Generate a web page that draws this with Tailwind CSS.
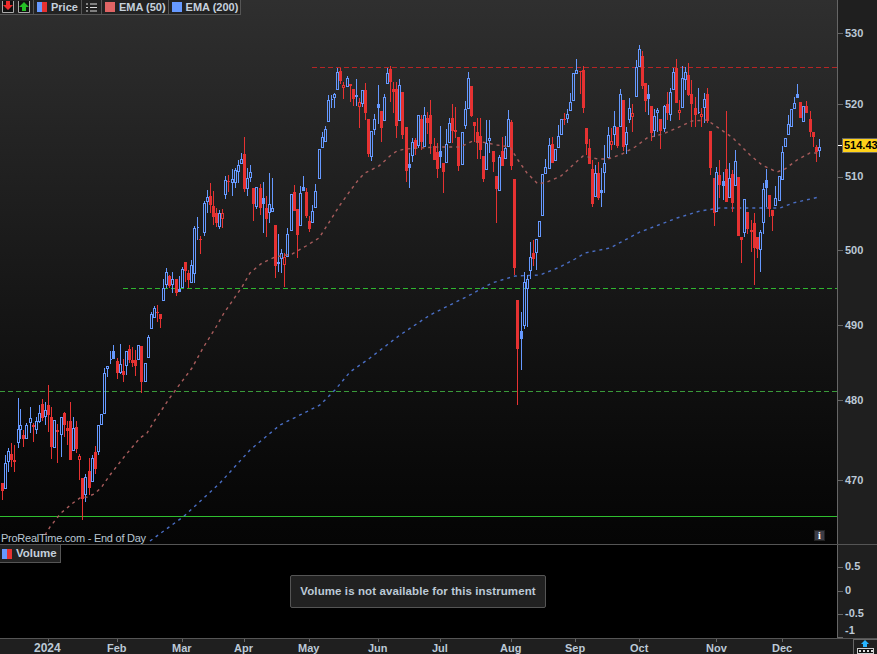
<!DOCTYPE html>
<html lang="en">
<head>
<meta charset="utf-8">
<title>Chart</title>
<script src="https://cdn.jsdelivr.net/npm/@tailwindcss/browser@4"></script>
</head>
<body class="m-0 overflow-hidden bg-black">
<div class="w-[877px] h-[654px] flex flex-col overflow-hidden font-['Liberation_Sans',Arial,sans-serif] text-[11px] font-bold text-[#bcc9d6] leading-none">
  <!-- price pane -->
  <div class="flex h-[545px] border-b border-[#555]">
    <div class="relative w-[837px] h-full bg-gradient-to-b from-[#2f2f2f] to-[#050505]">
      <svg id="chart" class="absolute inset-0" width="837" height="544" viewBox="0 0 837 544">
        <line x1="312" x2="837" y1="67.5" y2="67.5" stroke="#b52525" stroke-dasharray="5 3" shape-rendering="crispEdges"/>
        <line x1="123" x2="837" y1="288.5" y2="288.5" stroke="#2fb52f" stroke-dasharray="5 3" shape-rendering="crispEdges"/>
        <line x1="0" x2="837" y1="391.5" y2="391.5" stroke="#3a9a3a" stroke-dasharray="5 3" shape-rendering="crispEdges"/>
        <line x1="0" x2="837" y1="516.5" y2="516.5" stroke="#2fbf2f" shape-rendering="crispEdges"/>
        <polyline fill="none" stroke="#4a6ec4" stroke-width="1.4" stroke-dasharray="3 4" points="150,541 165,530 183,517 207,495 220,483 250,450 280,425 320,405 335,390 350,372 370,358 400,335 430,315 470,295 492,283 515,276 540,275 560,267 575,259 585,253 610,248 640,232 677,218 700,211 720,208 755,208 780,208 793,203 819,197"/>
        <path id="rw" fill="none" stroke="#e63232" shape-rendering="crispEdges"/>
        <path id="rb" fill="#e63232" shape-rendering="crispEdges"/>
        <path id="rh" fill="none" stroke="#e63232" shape-rendering="crispEdges"/>
        <path id="bw" fill="none" stroke="#6699ff" shape-rendering="crispEdges"/>
        <path id="bh" fill="none" stroke="#6699ff" shape-rendering="crispEdges"/>
        <path id="bs" fill="#6699ff" shape-rendering="crispEdges"/>
        <polyline fill="none" stroke="#a85c5c" stroke-width="1.4" stroke-dasharray="3 4" points="45,535 50,527 61,513 73,503 80,498 87,497 94,494 101,488 110,475 124,457 140,438 147,433 155,420 163,408 169,399 177,388 192,368 203,348 216,327 224,313 233,300 242,287 250,273 262,263 275,257 292,254 306,246 319,238 328,224 340,205 350,191 359,179 365,173 379,166 391,155 397,151 405,149 420,148 437,147 460,147 473,141 482,142 497,145 510,147 518,160 527,173 538,184 547,182 561,176 573,165 583,156 598,159 608,159 622,154 635,147 647,138 663,134 677,128 692,121 707,120 720,129 733,138 750,155 762,165 777,172 785,169 797,160 810,153 819,153"/>
      </svg>
      <!-- legend bar -->
      <div class="absolute left-0 top-0 flex h-[15px] items-center whitespace-nowrap bg-[#222] border-b border-r border-[#555] text-[#c5d0dc]">
        <div class="flex shrink-0 h-[14px] items-center gap-[2px] pl-[1px] pr-[2px] border-r border-[#555]">
          <svg width="14" height="12" viewBox="0 0 14 12"><path d="M1.500 0V11.500H12.500V0" fill="#111" stroke="#aaa"/><path d="M5 0H9V4H12L7 9L2 4H5Z" fill="#ee2b2b"/></svg>
          <svg width="14" height="12" viewBox="0 0 14 12"><path d="M1.500 0V11.500H12.500V0" fill="#111" stroke="#aaa"/><path d="M7 1L12 6H9V10H5V6H2Z" fill="#26c026"/></svg>
        </div>
        <div class="flex shrink-0 h-[14px] items-center gap-[4px] pl-[3px] pr-[3px] border-r border-[#555]">
          <span class="flex w-[10px] h-[10px]"><i class="w-1/2 bg-[#6699ff]"></i><i class="w-1/2 bg-[#e63232]"></i></span>
          <span>Price</span>
        </div>
        <div class="flex shrink-0 h-[14px] items-center px-[4px] border-r border-[#555]">
          <svg width="11" height="9" viewBox="0 0 11 9"><path d="M0 1H2M4 1H11M0 4.500H2M4 4.500H11M0 8H2M4 8H11" stroke="#ddd" fill="none"/></svg>
        </div>
        <div class="flex shrink-0 h-[14px] items-center gap-[4px] pl-[3px] pr-[2px] border-r border-[#555]">
          <span class="w-[10px] h-[10px] bg-[#e06464]"></span>
          <span>EMA (50)</span>
        </div>
        <div class="flex shrink-0 h-[14px] items-center gap-[4px] pl-[3px] pr-[2px]">
          <span class="w-[10px] h-[10px] bg-[#6699ff]"></span>
          <span>EMA (200)</span>
        </div>
      </div>
      <div class="absolute left-[1px] top-[533px] font-normal text-[11px] tracking-[-0.25px] text-[#b9c6d3]">ProRealTime.com - End of Day</div>
      <div class="absolute left-[814px] top-[530px] w-[11px] h-[11px] bg-[#3c3c46] border border-[#222] flex items-center justify-center font-['Liberation_Serif',serif] text-[10px] text-white">i</div>
    </div>
    <!-- price axis -->
    <div class="relative flex-1 bg-[#1f1f1f] border-l border-[#666]">
      <span class="absolute left-0 top-[33px] w-[5px] h-px bg-[#666]"></span><span class="absolute left-[7px] top-[28px]">530</span>
      <span class="absolute left-0 top-[104px] w-[5px] h-px bg-[#666]"></span><span class="absolute left-[7px] top-[99px]">520</span>
      <span class="absolute left-0 top-[177px] w-[5px] h-px bg-[#666]"></span><span class="absolute left-[7px] top-[171px]">510</span>
      <span class="absolute left-0 top-[250px] w-[5px] h-px bg-[#666]"></span><span class="absolute left-[7px] top-[245px]">500</span>
      <span class="absolute left-0 top-[325px] w-[5px] h-px bg-[#666]"></span><span class="absolute left-[7px] top-[320px]">490</span>
      <span class="absolute left-0 top-[400px] w-[5px] h-px bg-[#666]"></span><span class="absolute left-[7px] top-[395px]">480</span>
      <span class="absolute left-0 top-[480px] w-[5px] h-px bg-[#666]"></span><span class="absolute left-[7px] top-[475px]">470</span>
      <span class="absolute left-0 top-[145px] w-[5px] h-px bg-white"></span>
      <span class="absolute left-[4px] top-[138px] w-[36px] h-[15px] bg-[#ffd21a] border border-[#666] text-black text-[11px] flex items-center pl-[1px]">514.43</span>
    </div>
  </div>
  <!-- volume pane -->
  <div class="flex h-[94px] border-b border-[#555]">
    <div class="relative w-[837px] h-full bg-black flex items-center">
      <div class="absolute left-0 top-0 h-[18px] w-[61px] flex items-center gap-[4px] pl-[2px] bg-[#222] border border-l-0 border-t-0 border-[#555] text-[#c5d0dc] text-[11.500px]">
        <span class="flex w-[10px] h-[10px]"><i class="w-1/2 bg-[#6699ff]"></i><i class="w-1/2 bg-[#e63232]"></i></span>
        <span>Volume</span>
      </div>
      <div class="ml-[290px] w-[256px] h-[33px] flex items-center justify-center bg-[#212121] border border-[#555] rounded-[2px] text-[11.500px] tracking-[0.1px] text-[#bcc9d6]">Volume is not available for this instrument</div>
    </div>
    <div class="relative flex-1 bg-[#1f1f1f] border-l border-[#666]">
      <span class="absolute left-0 top-[22px] w-[5px] h-px bg-[#666]"></span><span class="absolute left-[7px] top-[16px]">0.5</span>
      <span class="absolute left-0 top-[46px] w-[5px] h-px bg-[#666]"></span><span class="absolute left-[7px] top-[40px]">0</span>
      <span class="absolute left-0 top-[69px] w-[5px] h-px bg-[#666]"></span><span class="absolute left-[7px] top-[63px]">-0.5</span>
      <span class="absolute left-0 top-[92px] w-[5px] h-px bg-[#666]"></span><span class="absolute left-[7px] top-[80px]">-1</span>
    </div>
  </div>
  <!-- time axis -->
  <div class="relative flex-1 bg-[#1f1f1f]">
    <span class="absolute left-[48px] top-0 w-px h-[3px] bg-[#666]"></span><span class="absolute left-[34px] top-[3px] text-[12px]">2024</span>
    <span class="absolute left-[117px] top-0 w-px h-[3px] bg-[#666]"></span><span class="absolute left-[107px] top-[4px]">Feb</span>
    <span class="absolute left-[182px] top-0 w-px h-[3px] bg-[#666]"></span><span class="absolute left-[172px] top-[4px]">Mar</span>
    <span class="absolute left-[244px] top-0 w-px h-[3px] bg-[#666]"></span><span class="absolute left-[234px] top-[4px]">Apr</span>
    <span class="absolute left-[309px] top-0 w-px h-[3px] bg-[#666]"></span><span class="absolute left-[298px] top-[4px]">May</span>
    <span class="absolute left-[378px] top-0 w-px h-[3px] bg-[#666]"></span><span class="absolute left-[368px] top-[4px]">Jun</span>
    <span class="absolute left-[440px] top-0 w-px h-[3px] bg-[#666]"></span><span class="absolute left-[432px] top-[4px]">Jul</span>
    <span class="absolute left-[511px] top-0 w-px h-[3px] bg-[#666]"></span><span class="absolute left-[500px] top-[4px]">Aug</span>
    <span class="absolute left-[575px] top-0 w-px h-[3px] bg-[#666]"></span><span class="absolute left-[565px] top-[4px]">Sep</span>
    <span class="absolute left-[639px] top-0 w-px h-[3px] bg-[#666]"></span><span class="absolute left-[630px] top-[4px]">Oct</span>
    <span class="absolute left-[716px] top-0 w-px h-[3px] bg-[#666]"></span><span class="absolute left-[706px] top-[4px]">Nov</span>
    <span class="absolute left-[782px] top-0 w-px h-[3px] bg-[#666]"></span><span class="absolute left-[772px] top-[4px]">Dec</span>
    <div class="absolute right-0 top-0 w-[24px] h-[15px] border-l border-t border-[#666] bg-[#1f1f1f]">
      <svg width="23" height="14" viewBox="0 0 23 14"><path d="M11 0L15 4H13V7H9V4H7Z" fill="#27b4ff"/><rect x="3.500" y="8.500" width="16" height="5" fill="#111" stroke="#ccc"/><path d="M5 10H7V12H5ZM9 10H11V12H9ZM13 10H15V12H13ZM17 10H19V12H17Z" fill="#ddd"/></svg>
    </div>
  </div>
</div>
<script>
// x, high, low, bodyTop, bodyBottom, kind (b hollow blue, s solid blue, r solid red, h hollow red)
var D=`2 483 500 483 491 r
5 455 489 463 489 b
8 448 472 451 462 b
11 443 467 454 460 r
14 445 472 460 462 r
18 398 448 429 443 b
20 409 439 425 430 b
23 430 447 435 439 r
26 423 439 425 439 b
30 407 433 418 423 b
33 423 442 425 427 r
36 417 434 421 430 b
39 405 423 413 422 b
42 399 421 404 418 r
45 402 425 410 417 b
48 385 432 405 415 r
51 407 459 417 447 r
54 420 448 420 448 b
57 424 463 430 432 r
61 417 457 417 435 b
64 412 437 413 425 r
67 421 445 428 431 r
70 402 460 421 460 r
73 417 451 428 451 b
76 421 453 427 449 r
79 454 480 456 460 h
82 478 520 478 499 r
85 474 502 477 495 b
89 458 495 471 488 r
92 455 482 458 482 b
95 446 474 452 469 r
98 425 455 425 452 b
101 414 425 414 425 b
104 368 414 373 414 b
107 366 377 366 369 b
110 351 364 359 360 b
113 345 359 351 359 s
117 358 379 361 373 r
120 344 374 364 373 b
123 359 382 371 375 r
126 351 375 351 366 b
129 345 363 349 360 r
132 347 367 360 363 r
135 350 376 360 366 r
138 345 360 345 360 b
141 346 393 346 382 r
145 363 382 363 382 b
148 335 358 337 358 b
151 312 329 314 329 b
154 306 318 308 318 b
157 305 322 312 313 r
160 314 328 314 319 r
163 279 301 288 301 b
166 268 288 272 285 b
169 275 288 276 286 r
172 272 293 279 285 b
176 279 296 279 293 r
179 276 292 289 292 s
182 267 288 269 288 b
185 262 282 262 271 r
188 270 288 273 280 r
191 260 283 265 283 b
194 226 283 228 274 b
197 217 240 227 228 b
200 236 254 239 240 r
204 201 236 203 233 b
207 190 213 197 202 b
210 183 213 196 205 r
213 191 225 206 217 r
216 208 227 213 223 r
219 210 229 213 227 b
222 209 228 213 219 h
225 176 199 180 195 b
228 175 192 181 182 r
232 169 196 179 183 b
235 168 188 170 183 b
238 160 183 165 172 b
241 153 164 159 164 b
244 137 192 154 189 r
247 168 196 178 189 b
250 165 182 172 178 b
253 188 221 188 204 r
256 187 209 187 207 b
260 184 215 188 208 r
263 182 233 198 204 s
266 196 237 208 219 r
269 173 223 204 213 b
272 178 212 208 212 b
275 225 278 225 266 r
278 234 272 262 264 b
281 249 273 253 259 b
284 253 287 257 265 h
287 228 257 234 257 b
291 194 231 194 231 b
294 185 211 192 211 r
297 209 258 209 235 r
300 186 226 193 226 b
303 176 191 187 191 s
306 188 218 192 216 r
309 216 232 221 229 r
312 205 223 211 223 b
315 184 208 191 208 b
319 149 179 149 179 b
322 132 148 137 148 b
325 126 142 129 142 b
328 95 122 100 122 b
331 95 108 99 100 b
334 93 108 94 98 b
337 68 90 72 90 b
340 68 84 71 81 r
343 82 99 85 88 h
347 76 87 78 87 b
350 84 102 84 86 r
353 89 106 89 99 r
356 79 106 95 97 b
359 98 128 102 107 h
362 90 107 90 104 b
365 83 120 90 113 r
368 119 157 119 154 r
371 131 161 131 157 b
374 114 135 119 130 b
378 85 124 104 108 s
381 111 142 111 128 r
384 94 121 97 121 b
387 68 84 73 84 b
390 66 102 69 82 r
393 82 113 89 92 r
396 82 138 89 126 r
399 79 121 85 121 b
402 92 139 92 135 r
406 127 182 127 171 r
409 153 188 164 168 s
412 138 162 142 156 b
415 138 155 140 149 r
418 115 148 115 146 b
421 115 150 119 142 r
424 107 147 115 147 b
427 112 134 118 123 r
430 100 154 115 144 r
434 138 160 146 160 r
437 143 178 152 169 r
440 126 168 151 157 s
443 163 193 163 172 r
446 129 163 144 163 b
449 118 143 123 143 b
452 104 143 118 131 r
455 107 138 130 132 r
458 137 171 137 166 r
462 132 165 132 165 b
465 101 129 109 126 b
468 72 109 78 109 b
471 86 117 86 116 r
474 122 142 122 126 r
477 118 159 132 143 r
480 118 159 136 150 r
483 156 182 156 179 r
486 120 170 143 170 b
489 120 153 138 141 b
493 151 172 151 162 r
496 176 223 176 189 r
499 155 191 157 191 b
502 137 166 151 166 r
505 136 159 148 159 b
508 110 147 119 147 b
511 120 170 122 166 r
514 179 275 179 268 r
517 300 405 300 349 r
521 312 370 331 339 s
524 272 329 282 326 b
527 275 327 279 289 b
530 242 279 257 271 b
533 240 266 253 259 r
536 239 270 239 253 b
539 221 237 221 237 b
542 174 216 174 216 b
545 159 174 167 174 b
549 138 169 145 169 b
552 137 163 144 163 r
555 149 161 149 161 b
558 125 148 136 148 b
561 119 135 119 135 b
564 113 125 119 120 r
567 109 123 114 119 b
570 93 111 102 111 b
573 73 101 73 101 b
576 59 74 70 74 b
580 71 94 71 72 r
583 66 113 70 108 r
586 128 155 128 144 r
589 139 164 148 164 r
592 160 207 169 204 r
595 165 197 173 197 b
598 162 200 173 198 r
601 168 207 190 193 s
604 145 193 163 173 b
608 127 158 135 158 b
611 128 150 141 145 h
614 111 145 126 135 b
617 127 148 127 146 r
620 89 127 94 127 b
623 100 151 100 147 r
626 127 154 132 145 b
629 98 123 108 120 b
632 104 132 113 117 h
636 60 97 67 97 b
639 45 67 49 67 b
642 51 89 56 86 r
645 83 112 83 101 r
648 85 115 94 99 s
651 106 141 106 133 r
654 109 137 116 131 b
657 108 132 110 113 b
660 119 149 119 131 r
664 105 132 106 129 b
667 92 120 104 113 r
670 88 121 92 115 b
673 68 90 72 90 b
676 59 103 68 103 r
679 100 120 110 113 h
682 66 108 78 108 b
685 67 90 72 80 b
688 63 96 75 95 r
691 80 127 94 104 r
695 97 127 108 115 r
698 88 114 112 113 b
701 108 127 114 117 h
704 93 123 99 108 b
707 88 123 94 121 r
710 131 175 131 168 r
714 178 226 178 213 r
716 167 212 172 212 b
719 160 198 175 185 r
723 172 200 181 186 s
726 111 202 169 202 r
729 163 198 178 198 b
732 170 212 174 203 r
735 150 186 161 186 b
738 177 236 177 236 r
741 237 263 237 240 r
744 199 237 199 233 b
747 212 234 212 229 r
751 220 252 230 232 r
754 213 285 223 248 r
757 237 258 237 249 r
760 230 272 232 250 b
763 183 234 189 223 b
766 169 207 180 188 s
769 195 217 195 209 r
772 210 231 210 216 r
775 186 206 198 206 b
779 176 201 176 201 b
782 146 180 152 180 b
785 138 147 138 147 b
788 115 135 124 135 b
791 109 127 109 127 b
794 97 109 103 109 b
797 84 98 94 98 s
800 102 118 102 118 r
803 106 122 106 122 b
806 101 113 106 113 r
810 111 137 119 132 r
813 132 147 132 137 r
816 145 162 147 152 r
819 139 157 147 151 b`;
var p={rw:'',rb:'',rh:'',bw:'',bh:'',bs:''};
D.split('\n').forEach(function(l){
  var a=l.trim().split(' '),x=+a[0],H=+a[1],L=+a[2],T=+a[3],B=+a[4],k=a[5];
  var red=k=='r'||k=='h',w=red?'rw':'bw',c=x+.5;
  if(H<T)p[w]+='M'+c+' '+H+'V'+T;
  if(L>B)p[w]+='M'+c+' '+B+'V'+L;
  if(k=='r'||k=='s'){p[k=='r'?'rb':'bs']+='M'+(x-1)+' '+T+'h3V'+B+'h-3Z';}
  else{p[k=='h'?'rh':'bh']+='M'+(c-1)+' '+(T+.5)+'h2V'+(B-.5)+'h-2Z';}
});
for(var k in p)document.getElementById(k).setAttribute('d',p[k]);
</script>
</body>
</html>
